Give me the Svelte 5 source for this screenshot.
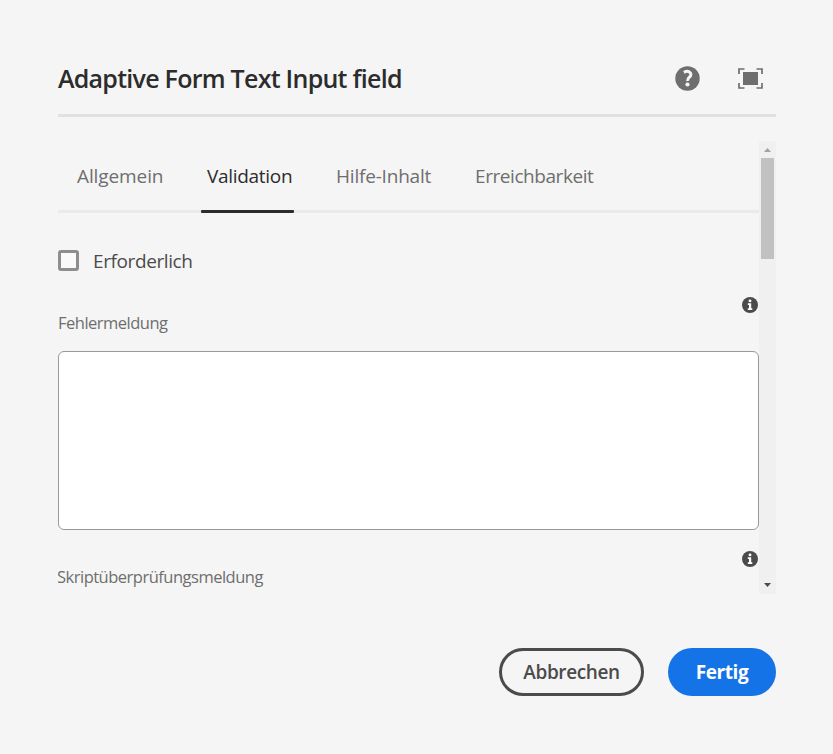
<script>
  const tabs = [
    { label: 'Allgemein', left: 19, width: 86, spacing: -0.1 },
    { label: 'Validation', left: 38, width: 93, spacing: -0.3, active: true },
    { label: 'Hilfe-Inhalt', left: 42, width: 96, spacing: -0.2 },
    { label: 'Erreichbarkeit', left: 43, width: 119, spacing: -0.43 }
  ];
</script>

{#snippet info()}
  <svg class="info" width="16" height="16" viewBox="0 0 16 16" aria-hidden="true">
    <circle cx="8" cy="8" r="8" fill="#4b4b4b" />
    <circle cx="8" cy="3.9" r="1.45" fill="#fff" />
    <path d="M5.8 6.2h3.4v5h1.1v1.7H5.8v-1.7H7V7.9H5.8z" fill="#fff" />
  </svg>
{/snippet}

<div class="dialog">
  <header>
    <h1>Adaptive Form Text Input field</h1>
    <svg class="help" width="25" height="25" viewBox="0 0 25 25" aria-label="Hilfe">
      <circle cx="12.5" cy="12.5" r="12.2" fill="#6e6e6e" />
      <path d="M8.9 6.3Q12 4.7 14.2 5.8C16.7 7.1 16.2 9.6 14.4 11.2C12.9 12.5 12.4 13 12.6 15" fill="none" stroke="#f5f5f5" stroke-width="3" />
      <circle cx="12.5" cy="18.5" r="2.1" fill="#f5f5f5" />
    </svg>
    <svg class="full" width="25" height="21" viewBox="0 0 25 21" aria-label="Vollbild">
      <path d="M1 6V1H6.5M18.5 1H24V6M24 15V20H18.5M6.5 20H1V15" fill="none" stroke="#6e6e6e" stroke-width="1.7" />
      <rect x="5" y="4" width="15" height="13" fill="#6e6e6e" />
    </svg>
  </header>

  <div class="panel">
    <main>
      <nav>
        {#each tabs as tab}
          <button class="tab" class:active={tab.active} style:margin-left="{tab.left}px" style:width="{tab.width}px" style:letter-spacing="{tab.spacing}px"><span>{tab.label}</span></button>
        {/each}
      </nav>
      <label class="check"><span class="box"></span><span class="checktext">Erforderlich</span></label>
      <div class="inforow">{@render info()}</div>
      <div class="label first">Fehlermeldung</div>
      <textarea aria-label="Fehlermeldung"></textarea>
      <div class="inforow second">{@render info()}</div>
      <div class="label script">Skriptüberprüfungsmeldung</div>
    </main>
    <div class="scrollbar">
      <svg width="7" height="4" viewBox="0 0 7 4"><path d="M0 4L3.5 0L7 4z" fill="#a3a3a3" /></svg>
      <div class="thumb"></div>
      <svg class="down" width="7" height="4" viewBox="0 0 7 4"><path d="M0 0H7L3.5 4z" fill="#4b4b4b" /></svg>
    </div>
  </div>

  <footer>
    <button class="cancel"><span>Abbrechen</span></button>
    <button class="done"><span>Fertig</span></button>
  </footer>
</div>

<style>
  :global(body) { margin: 0; background: #f5f5f5; }
  .dialog {
    box-sizing: border-box; width: 833px; height: 754px; padding: 42px 57px 0 58px;
    background: #f5f5f5; color: #4b4b4b; font-family: "Open Sans", "Noto Sans", sans-serif;
    overflow: hidden;
  }
  header { display: flex; align-items: center; height: 72px; border-bottom: 3px solid #e1e1e1; }
  h1 { margin: 0 auto 0 0; font-size: 25px; line-height: 36px; font-weight: 600; letter-spacing: -0.74px; word-spacing: 0; color: #2c2c2c; white-space: nowrap; }
  .help { margin-right: 38px; }
  .full { margin-right: 13px; }
  .panel { display: flex; height: 453px; margin-top: 24px; }
  main { width: 701px; height: 453px; overflow: hidden; }
  button { padding: 0; border: 0; background: none; font-family: inherit; white-space: nowrap; }
  nav { display: flex; box-sizing: border-box; height: 72px; border-bottom: 3px solid #eaeaea; }
  .tab { position: relative; display: flex; height: 69px; padding-top: 21px; box-sizing: border-box; font-size: 19px; line-height: 28px; color: #6e6e6e; }
  .active { padding-left: 6px; color: #2c2c2c; }
  .active::after { content: ""; position: absolute; left: 0; right: 0; bottom: -3px; height: 3px; border-radius: 1px; background: #2c2c2c; }
  .check { display: flex; align-items: center; height: 21px; margin-top: 37px; }
  .box { box-sizing: border-box; width: 21px; height: 21px; border: 3px solid #8e8e8e; border-radius: 3px; background: #fafafa; }
  .checktext { margin-left: 14px; font-size: 19px; line-height: 28px; letter-spacing: -0.4px; }
  .inforow { display: flex; justify-content: flex-end; height: 16px; margin-top: 26px; margin-right: 1px; }
  .info { display: block; }
  .label { height: 24px; font-size: 16.5px; line-height: 24px; letter-spacing: -0.5px; color: #6e6e6e; white-space: nowrap; }
  .first { margin-top: -2px; }
  textarea { display: block; box-sizing: border-box; width: 701px; height: 179px; margin: 16px 0 0; padding: 12px; border: 1px solid #999; border-radius: 6px; background: #fff; resize: none; outline: 0; }
  .second { margin-top: 21px; }
  .script { margin-top: -2px; margin-left: -1px; }
  .scrollbar { display: flex; flex-direction: column; align-items: center; width: 17px; height: 453px; box-sizing: border-box; padding: 7px 0; background: #f0f0f0; }
  .scrollbar svg { display: block; flex: none; }
  .thumb { width: 13px; height: 101px; margin-top: 6px; background: #c1c1c1; }
  .down { margin-top: auto; }
  footer { display: flex; justify-content: flex-end; gap: 24px; margin-top: 54px; }
  footer button { box-sizing: border-box; height: 48px; border-radius: 24px; font-size: 19px; line-height: 28px; font-weight: 600; letter-spacing: -0.4px; }
  .cancel { width: 145px; border: 3px solid #4b4b4b; color: #4b4b4b; }
  .done { width: 108px; background: #1473e6; color: #fff; font-weight: 700; }
</style>
